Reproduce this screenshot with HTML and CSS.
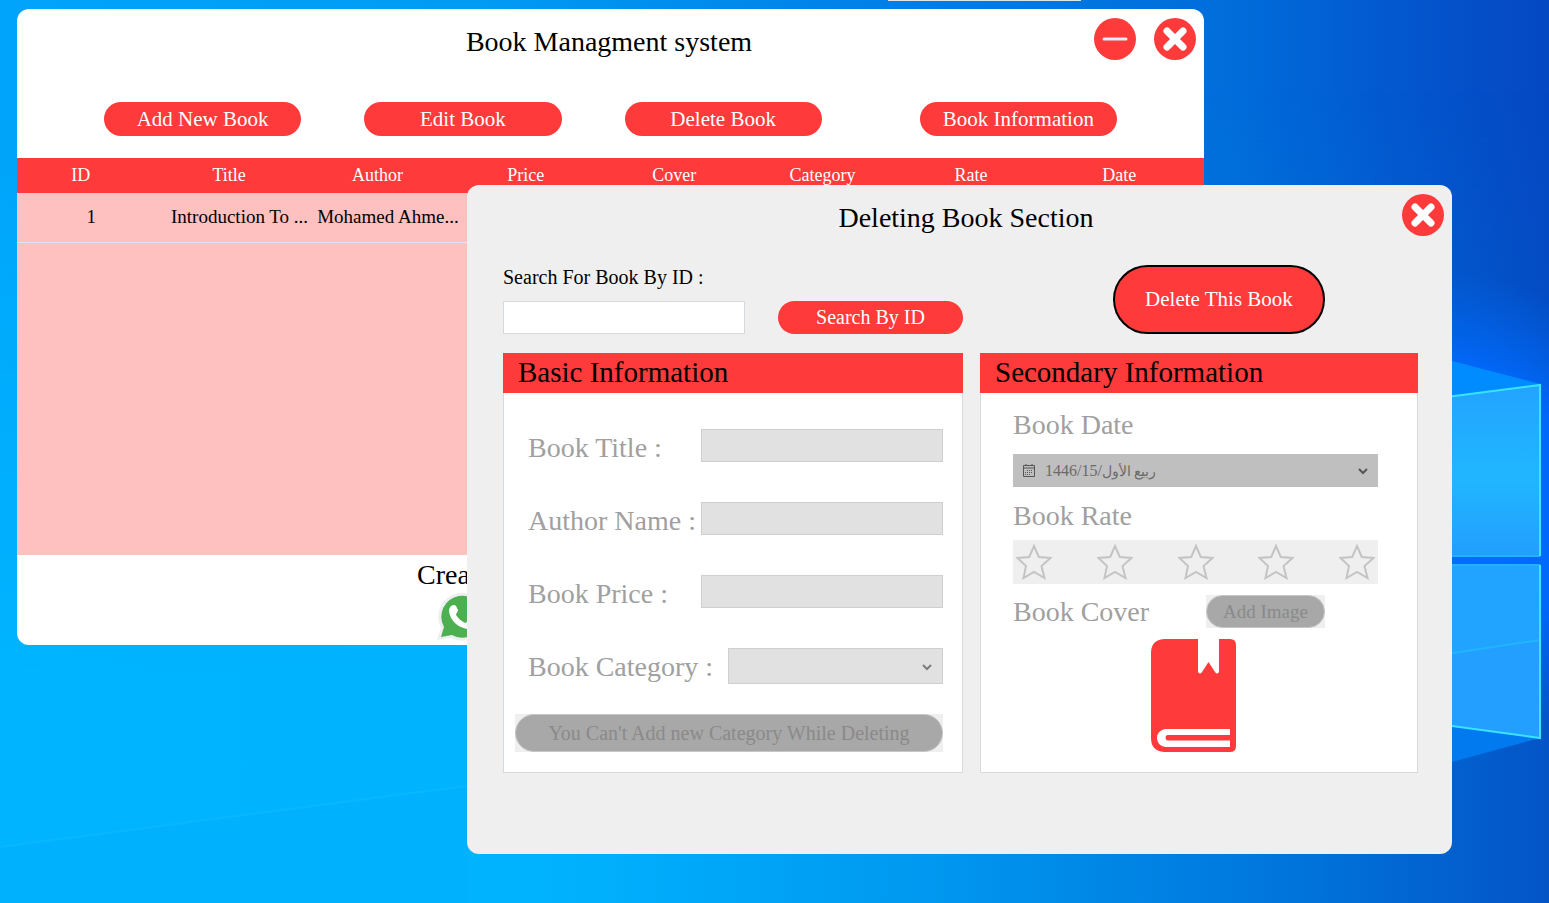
FILE: index.html
```html
<!DOCTYPE html>
<html lang="en">
<head>
<meta charset="utf-8">
<title>Book Managment system</title>
<link rel="stylesheet" href="styles.css">
</head>
<body>
<svg class="wallpaper" viewBox="0 0 1549 903" preserveAspectRatio="xMidYMid slice" aria-hidden="true">
  <defs>
    <linearGradient id="sky" x1="0" x2="1" y1="0" y2="0">
      <stop offset="0" stop-color="#00a4fa"/>
      <stop offset=".3" stop-color="#009cf4"/>
      <stop offset=".55" stop-color="#0082e8"/>
      <stop offset=".8" stop-color="#006cda"/>
      <stop offset=".92" stop-color="#0454cc"/>
      <stop offset="1" stop-color="#0448c2"/>
    </linearGradient>
    <linearGradient id="floor" x1="0" x2="1" y1="0" y2="0">
      <stop offset="0" stop-color="#00b4ff"/>
      <stop offset=".35" stop-color="#00b3ff"/>
      <stop offset=".6" stop-color="#0098f0"/>
      <stop offset=".85" stop-color="#0072da"/>
      <stop offset="1" stop-color="#0454c6"/>
    </linearGradient>
    <linearGradient id="fade" x1="0" x2="0" y1="0" y2="1">
      <stop offset=".1" stop-color="#000"/>
      <stop offset=".75" stop-color="#fff"/>
    </linearGradient>
    <mask id="lower"><rect width="1549" height="903" fill="url(#fade)"/></mask>
    <radialGradient id="glow" gradientUnits="userSpaceOnUse" cx="1440" cy="510" r="240">
      <stop offset="0" stop-color="#0070ff"/>
      <stop offset=".6" stop-color="#006aff" stop-opacity=".9"/>
      <stop offset="1" stop-color="#0068f0" stop-opacity="0"/>
    </radialGradient>
    <linearGradient id="pane" x1="0" x2="0" y1="0" y2="1">
      <stop offset="0" stop-color="#22a4ff"/>
      <stop offset=".55" stop-color="#20b6ff"/>
      <stop offset="1" stop-color="#229eff"/>
    </linearGradient>
  </defs>
  <rect width="1549" height="903" fill="url(#sky)"/>
  <rect width="1549" height="903" fill="url(#floor)" mask="url(#lower)"/>
  <path d="M0 847 467 786V903H0Z" fill="#00a8f8" opacity=".2"/>
  <path d="M0 847 467 786" stroke="#10bcff" stroke-width="2" opacity=".5"/>
  <rect width="1549" height="903" fill="url(#glow)"/>
  <path d="M1452 361 1540 384 1452 396Z" fill="#008cff"/>
  <path d="M1452 726 1540 738 1452 762Z" fill="#007aee"/>
  <path d="M1400 403 1540 385V556H1400Z" fill="url(#pane)"/>
  <path d="M1400 565H1540V738L1400 719Z" fill="#229fff"/>
  <path d="M1400 565H1540V640L1400 660Z" fill="#20aaff" opacity=".5"/>
  <path d="M1400 661 1540 640" stroke="#20b6ff" stroke-width="2"/>
  <path d="M1400 556H1540M1400 565H1540" stroke="#20b2ff" stroke-width="2"/>
  <path d="M1400 403 1540 385V556M1540 565V738L1400 719" fill="none" stroke="#38e4ff" stroke-width="2"/>
  <path d="M888 0H1081V1H888Z" fill="#dce6ea"/>
</svg>

<main class="window library">
  <header class="titlebar">
    <h1 class="title">Book Managment system</h1>
    <div class="controls">
      <button class="round" type="button" aria-label="Minimize"><svg viewBox="0 0 42 42"><circle cx="21" cy="21" r="21" fill="#ff3a3a"/><path d="M10 21H32" stroke="#dcecff" stroke-width="3" stroke-linecap="round"/></svg></button>
      <button class="round" type="button" aria-label="Close"><svg viewBox="0 0 42 42"><circle cx="21" cy="21" r="21" fill="#ff3a3a"/><path d="M13 13 29 29M29 13 13 29" stroke="#fff" stroke-width="7" stroke-linecap="round"/></svg></button>
    </div>
  </header>
  <nav class="toolbar">
    <button class="pill" type="button">Add New Book</button>
    <button class="pill" type="button">Edit Book</button>
    <button class="pill" type="button">Delete Book</button>
    <button class="pill last" type="button">Book Information</button>
  </nav>
  <div class="grid-area">
    <table class="books">
      <thead>
        <tr><th>ID</th><th>Title</th><th>Author</th><th>Price</th><th>Cover</th><th>Category</th><th>Rate</th><th>Date</th></tr>
      </thead>
      <tbody>
        <tr><td>1</td><td>Introduction To ...</td><td>Mohamed Ahme...</td><td></td><td></td><td></td><td></td><td></td></tr>
      </tbody>
    </table>
  </div>
  <footer class="credits">
    <p class="credit-text">Created</p>
    <svg class="whatsapp" viewBox="0 0 50 50" role="img" aria-label="WhatsApp">
      <path d="M0 48 4 36A24 24 0 1 1 14 46Z" fill="#eceff1"/>
      <path d="M4 45 7 35A21 21 0 1 1 15 43Z" fill="#4caf50"/>
      <path d="M17 13C14 13 12 16 12 19 13 29 22 37 33 37 37 37 39 33 38 30L32 27C30 28 30 31 28 31 24 29 21 26 19 23 19 21 21 20 21 18L19 14C18 13 18 13 17 13Z" fill="#fff"/>
    </svg>
  </footer>
</main>

<section class="window dialog" role="dialog" aria-labelledby="dialog-title">
  <header class="titlebar">
    <h2 class="title" id="dialog-title">Deleting Book Section</h2>
    <div class="controls">
      <button class="round" type="button" aria-label="Close"><svg viewBox="0 0 42 42"><circle cx="21" cy="21" r="21" fill="#ff3a3a"/><path d="M13 13 29 29M29 13 13 29" stroke="#fff" stroke-width="7" stroke-linecap="round"/></svg></button>
    </div>
  </header>
  <div class="columns">
    <form class="search">
      <label class="search-label" for="book-id">Search For Book By ID :</label>
      <div class="search-row">
        <input class="field" id="book-id" type="text">
        <button class="pill" type="button">Search By ID</button>
      </div>
    </form>
    <div class="action">
      <button class="delete" type="button">Delete This Book</button>
    </div>

    <section class="panel">
      <h3 class="panel-title">Basic Information</h3>
      <div class="basic">
        <div class="row"><label for="b-title">Book Title :</label><input class="field" id="b-title" type="text" disabled></div>
        <div class="row"><label for="b-author">Author Name :</label><input class="field" id="b-author" type="text" disabled></div>
        <div class="row"><label for="b-price">Book Price :</label><input class="field" id="b-price" type="text" disabled></div>
        <div class="row"><label for="b-category">Book Category :</label>
          <span class="picker"><select class="field" id="b-category" disabled><option></option></select><svg class="chevron" viewBox="0 0 10 8"><path d="M1 2 5 6 9 2" fill="none" stroke="#7c7c7c" stroke-width="2"/></svg></span>
        </div>
        <div class="backing wide"><button class="muted" type="button" disabled>You Can't Add new Category While Deleting</button></div>
      </div>
    </section>

    <section class="panel">
      <h3 class="panel-title">Secondary Information</h3>
      <div class="secondary">
        <label class="caption" for="b-date">Book Date</label>
        <button class="date" id="b-date" type="button" disabled>
          <svg class="calendar" viewBox="0 0 12 13"><path d="M.5 1.5H11.5V12.5H.5ZM.5 4H11.5M3 0V2M9 0V2" fill="none" stroke="#555"/><path d="M4 6.500H10M2 8.500H10M2 10.500H8" stroke="#555" stroke-dasharray="1 1"/></svg>
          <span class="date-text">1446/15/<span class="month">ربيع الأول</span></span>
          <svg class="chevron-icon" viewBox="0 0 10 8"><path d="M1 2 5 6 9 2" fill="none" stroke="#555" stroke-width="2"/></svg>
        </button>
        <span class="caption" id="rate-label">Book Rate</span>
        <div class="stars" role="radiogroup" aria-labelledby="rate-label">
          <label class="star"><input type="radio" name="rate" aria-label="1 star" disabled><svg viewBox="0 0 36 36"><path d="M18 2 22.800 13 34.500 14 25.500 22 28.500 34 18 28 7.500 34 10 22 1.500 14 13.200 13Z"/></svg></label>
          <label class="star"><input type="radio" name="rate" aria-label="2 stars" disabled><svg viewBox="0 0 36 36"><path d="M18 2 22.800 13 34.500 14 25.500 22 28.500 34 18 28 7.500 34 10 22 1.500 14 13.200 13Z"/></svg></label>
          <label class="star"><input type="radio" name="rate" aria-label="3 stars" disabled><svg viewBox="0 0 36 36"><path d="M18 2 22.800 13 34.500 14 25.500 22 28.500 34 18 28 7.500 34 10 22 1.500 14 13.200 13Z"/></svg></label>
          <label class="star"><input type="radio" name="rate" aria-label="4 stars" disabled><svg viewBox="0 0 36 36"><path d="M18 2 22.800 13 34.500 14 25.500 22 28.500 34 18 28 7.500 34 10 22 1.500 14 13.200 13Z"/></svg></label>
          <label class="star"><input type="radio" name="rate" aria-label="5 stars" disabled><svg viewBox="0 0 36 36"><path d="M18 2 22.800 13 34.500 14 25.500 22 28.500 34 18 28 7.500 34 10 22 1.500 14 13.200 13Z"/></svg></label>
        </div>
        <div class="cover-row">
          <span class="caption">Book Cover</span>
          <div class="backing"><button class="muted small" type="button" disabled>Add Image</button></div>
        </div>
        <svg class="cover" viewBox="0 0 85 113" role="img" aria-label="Book cover">
          <path d="M13 0H47V33Q49 36 51 33L57.500 23 64 33Q66 36 68 33V0H79Q85 0 85 6V107Q85 113 79 113H13Q0 112 0 99V14Q0 1 13 0Z" fill="#ff3a3a"/>
          <path d="M14 90H79V96H17Q14.500 96 14.500 98.500T17 101.500H79V108H14Q6 106 6 99T14 90Z" fill="#fff"/>
        </svg>
      </div>
    </section>
  </div>
</section>
</body>
</html>
```
FILE: styles.css
```css
* { box-sizing: border-box; }

html, body { height: 100%; }

body {
  margin: 0;
  overflow: hidden;
  background: #00a8fa;
  color: #000;
  font-family: "Liberation Serif", "Times New Roman", serif;
  font-size: 20px;
}

button, input, select { font: inherit; }
h1, h2, h3, p { margin: 0; font-weight: 400; }
svg { display: block; }

.wallpaper {
  position: absolute;
  inset: 0;
  width: 100%;
  height: 100%;
}

.window {
  position: absolute;
  border-radius: 12px;
  overflow: hidden;
}

.library {
  top: 9px;
  left: 17px;
  right: 345px;
  background: #fff;
}

.dialog {
  top: 185px;
  left: 467px;
  right: 97px;
  padding-bottom: 81px;
  background: #efefef;
}

.titlebar {
  display: grid;
  grid-template-columns: 140px 1fr 140px;
  padding: 9px 8px 0 5px;
}

.dialog .titlebar { grid-template-columns: 60px 1fr 44px; }

.title {
  grid-column: 2;
  font-size: 28px;
  line-height: 48px;
  text-align: center;
}

.controls {
  display: flex;
  justify-content: flex-end;
  gap: 18px;
}

.round {
  width: 42px;
  height: 42px;
  padding: 0;
  border: 0;
  background: none;
}

.toolbar {
  display: flex;
  gap: 63px;
  padding: 36px 87px 22px;
}

.pill {
  height: 34px;
  flex: 1;
  padding: 0;
  border: 0;
  border-radius: 17px;
  background: #ff3a3a;
  color: #fff;
}

.toolbar .pill, .delete { font-size: 21px; }

.last { margin-left: 35px; }

.grid-area {
  min-height: 397px;
  background: #ffc0c0;
}

.books {
  width: 100%;
  table-layout: fixed;
  border-collapse: collapse;
  font-size: 18px;
}

.books th {
  height: 35px;
  padding: 0 21px 0 0;
  background: #ff3a3a;
  color: #fff;
  font-weight: 400;
}

.books td {
  height: 49px;
  padding: 0;
  border-bottom: 1px solid #dfe3ff;
  font-size: 19px;
  text-align: center;
  white-space: nowrap;
}

.credits {
  height: 90px;
  padding: 2px 0 0 400px;
}

.credit-text {
  font-size: 28px;
  line-height: 35px;
}

.whatsapp {
  width: 50px;
  height: 50px;
  margin-left: 20px;
}

.columns {
  display: grid;
  grid-template-columns: 460fr 438fr;
  column-gap: 17px;
  padding: 23px 34px 0 36px;
}

.search-label {
  display: block;
  line-height: 24px;
}

.search { padding-bottom: 19px; }

.search-row {
  display: flex;
  gap: 33px;
  padding-top: 12px;
}

.search-row .pill { height: 33px; }

.field {
  width: 242px;
  height: 33px;
  padding: 0 8px;
  border: 1px solid #d5dadf;
  border-radius: 0;
  background: #fff;
}

.field:disabled {
  border-color: #cfcfcf;
  background: #e1e1e1;
  opacity: 1;
}

.action {
  display: flex;
  justify-content: flex-end;
  align-items: flex-start;
  padding-right: 93px;
}

.delete {
  width: 212px;
  height: 69px;
  border: 2px solid #000;
  border-radius: 35px;
  background: #ff3a3a;
  color: #fff;
}

.panel {
  display: flex;
  flex-direction: column;
  border: 1px solid #d5dadf;
  border-top: 0;
  background: #fff;
}

.panel-title {
  height: 40px;
  margin: 0 -1px;
  padding-left: 15px;
  background: #ff3a3a;
  font-size: 29px;
  line-height: 38px;
}

.basic {
  padding: 36px 19px 20px 24px;
  color: #a0a0a0;
}

.row {
  display: flex;
  justify-content: space-between;
  height: 33px;
  margin-bottom: 40px;
  font-size: 28px;
  line-height: 37px;
  white-space: nowrap;
}

.picker { position: relative; }

.picker .field {
  display: block;
  width: 215px;
  height: 36px;
  appearance: none;
}

.chevron {
  position: absolute;
  top: 15px;
  right: 11px;
  width: 10px;
  height: 8px;
}

.backing { background: #efefef; }

.wide {
  margin: -7px 0 0 -13px;
}

.muted {
  display: block;
  width: 100%;
  height: 38px;
  padding: 0;
  border: 1px solid #c6c6c6;
  border-radius: 19px;
  background: #a8a8a8;
  color: #8a8a8a;
}

.small {
  width: 119px;
  height: 33px;
  border-radius: 17px;
  font-size: 19px;
}

.secondary {
  display: flex;
  flex-direction: column;
  padding: 14px 39px 20px 32px;
}

.caption {
  color: #a0a0a0;
  font-size: 28px;
  line-height: 36px;
}

.date {
  display: flex;
  align-items: center;
  gap: 10px;
  height: 33px;
  margin: 11px 0;
  padding: 0 10px;
  border: 0;
  background: #bfbfbf;
  color: #6a6a6a;
  font-size: 16px;
}

.calendar { width: 12px; height: 13px; }
.date-text { flex: 1; text-align: left; }
.month { font-size: 14px; }
.chevron-icon { width: 10px; height: 8px; }

.stars {
  display: flex;
  justify-content: space-between;
  height: 44px;
  margin: 6px 0 11px;
  padding: 4px 3px;
  background: #efefef;
}

.star { width: 36px; }

.star input {
  position: absolute;
  margin: 0;
  opacity: 0;
}

.star path {
  fill: none;
  stroke: #c4c4c4;
  stroke-width: 2;
}

.cover-row {
  display: flex;
  align-items: flex-start;
  justify-content: space-between;
  padding-right: 53px;
}

.cover-row .caption { line-height: 33px; }

.cover {
  width: 85px;
  height: 113px;
  margin: 11px 0 0 138px;
}
```
